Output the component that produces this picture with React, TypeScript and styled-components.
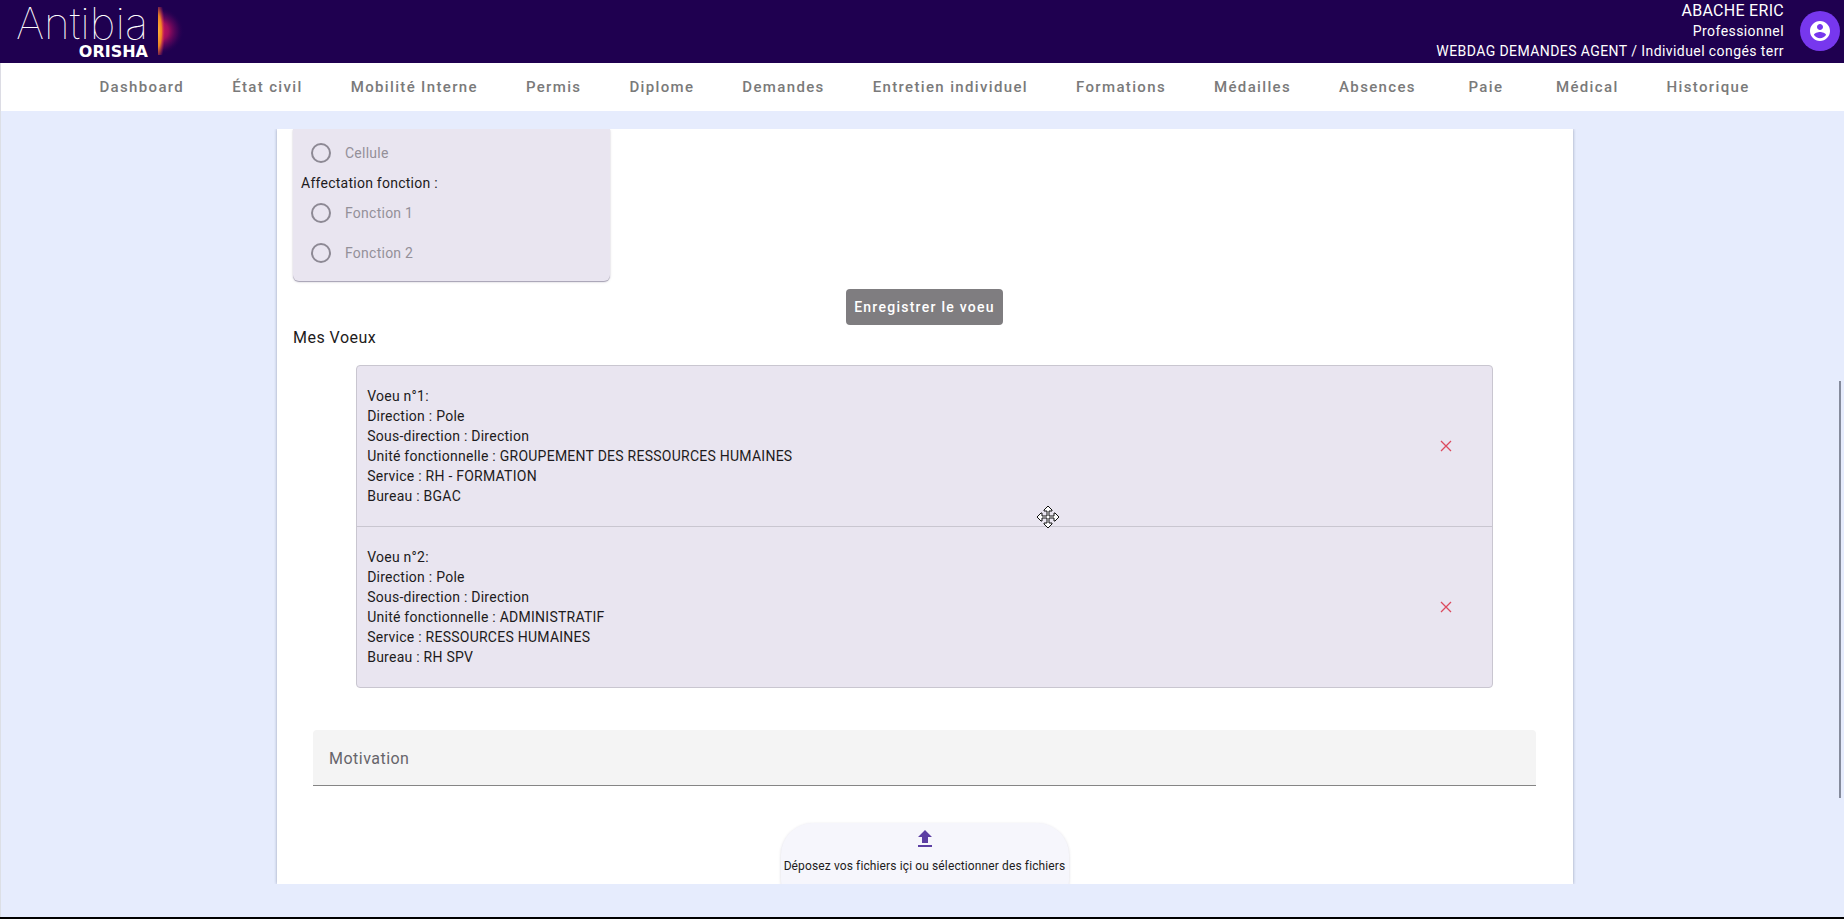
import React from 'react';
import styled, { createGlobalStyle } from 'styled-components';

const GlobalStyle = createGlobalStyle`
  * { box-sizing: border-box; }
  body {
    margin: 0;
    font-family: Roboto, "Liberation Sans", sans-serif;
    font-size: 14px;
    line-height: 20px;
    letter-spacing: 0.018em;
    color: #1d1b20;
    overflow: hidden;
  }
  button, input, textarea { font: inherit; letter-spacing: inherit; }
  p, h2, ul { margin: 0; padding: 0; }
`;

const Page = styled.div`
  display: flex;
  flex-direction: column;
  height: 100vh;
  border-bottom: 2px solid #000;
`;

const Header = styled.header`
  flex: none;
  display: flex;
  justify-content: space-between;
  align-items: center;
  height: 63px;
  padding: 0 4px 1px 0;
  background: #1f0050;
  color: #fff;
`;

const Brand = styled.a`
  display: flex;
  align-items: center;
  gap: 8px;
  color: #fff;
  text-decoration: none;
`;

const BrandWords = styled.span`
  display: flex;
  flex-direction: column;
  align-items: flex-end;
  width: 148px;
`;

const BrandName = styled.span`
  font: 100 44px/42px Inter, sans-serif;
  letter-spacing: normal;
  white-space: nowrap;
`;

const BrandGroup = styled.span`
  font: 700 16px/16px "DejaVu Sans", sans-serif;
  letter-spacing: normal;
`;

const Account = styled.div`
  display: flex;
  align-items: center;
  gap: 16px;
`;

const Identity = styled.div`
  text-align: right;
  letter-spacing: 0.03em;
`;

const IdentityName = styled.p`
  font-size: 16px;
  letter-spacing: 0.018em;
`;

const AvatarButton = styled.button`
  display: grid;
  place-items: center;
  width: 40px;
  height: 40px;
  padding: 0;
  border: 0;
  border-radius: 50%;
  background: #7737ee;
  color: #fff;
`;

const NavBar = styled.nav`
  flex: none;
  display: flex;
  justify-content: center;
  align-items: center;
  gap: 32px;
  height: 48px;
  padding-left: 4px;
  border-left: 1px solid #dcdce4;
  background: #fff;
`;

const NavLink = styled.a`
  min-width: 60px;
  padding: 0 8px;
  font-size: 15px;
  font-weight: 500;
  letter-spacing: 0.09em;
  color: #7a7a7a;
  text-align: center;
  text-decoration: none;
  white-space: nowrap;
`;

const Main = styled.main`
  position: relative;
  flex: 1;
  min-height: 0;
  display: flex;
  padding: 18px 271px 33px 276px;
  border-left: 1px solid #dcdfe6;
  background: #e6ecfd;
`;

const Paper = styled.form`
  flex: 1;
  overflow: hidden;
  padding: 0 17px 0 16px;
  background: #fff;
  box-shadow: 0 0 3px rgba(40, 50, 80, 0.4);
  clip-path: inset(0 -3px);
`;

const ScrollThumb = styled.div`
  position: absolute;
  top: 33.5%;
  right: 3px;
  width: 2px;
  height: 51.7%;
  background: #858b9c;
`;

const ChoiceCard = styled.div`
  width: 317px;
  padding: 4px 8px 8px;
  border-radius: 0 0 6px 6px;
  background: #e9e5f0;
  box-shadow: 0 1px 1px rgba(60, 50, 90, 0.4), 0 1px 3px rgba(60, 50, 90, 0.15);
`;

const RadioRow = styled.label`
  display: flex;
  align-items: center;
  gap: 14px;
  height: 40px;
  padding-left: 10px;
  color: #949099;
`;

const Radio = styled.input`
  appearance: none;
  width: 20px;
  height: 20px;
  margin: 0;
  border: 2px solid #8d8994;
  border-radius: 50%;
`;

const SaveButton = styled.button`
  display: block;
  height: 36px;
  margin: 8px auto 0;
  padding: 0 8px;
  border: 0;
  border-radius: 4px;
  background: #7f7d80;
  color: #fff;
  font-weight: 500;
  letter-spacing: 0.09em;
`;

const SectionTitle = styled.h2`
  font-size: 16px;
  font-weight: 400;
  line-height: 26px;
  letter-spacing: 0.03em;
`;

const WishList = styled.ul`
  width: 90%;
  margin: 14px auto 0;
  border: 1px solid #c9c6d0;
  border-radius: 4px;
  background: #e9e5f0;
  list-style: none;
`;

const Wish = styled.li`
  display: flex;
  justify-content: space-between;
  align-items: center;
  padding: 20px 10px;
  cursor: move;

  & + & { border-top: 1px solid #c9c6d0; }
`;

const RemoveButton = styled.button`
  display: grid;
  place-items: center;
  width: 72px;
  height: 40px;
  padding: 0;
  border: 0;
  background: none;
  color: #dc4a5e;
`;

const MotivationField = styled.input`
  display: block;
  width: calc(100% - 40px);
  height: 56px;
  margin: 42px auto 37px;
  padding: 2px 16px 0;
  border: 0;
  border-bottom: 1px solid #858585;
  border-radius: 4px 4px 0 0;
  background: #f4f4f4;
  font-size: 16px;
  letter-spacing: 0.03em;

  &::placeholder { color: #66646a; opacity: 1; }
`;

const DropZone = styled.button`
  display: flex;
  flex-direction: column;
  align-items: center;
  gap: 5px;
  width: 288px;
  height: 88px;
  margin: 0 auto;
  padding: 4px 0 0;
  border: 0;
  border-radius: 32px;
  background: #f6f6fc;
  box-shadow: 0 1px 3px rgba(60, 50, 90, 0.2);
  color: #1d1b20;
  font-size: 12px;
  letter-spacing: 0.01em;

  svg { color: #5c3fa3; }
`;

const Pointer = styled.svg`
  position: absolute;
  left: 1035px;
  top: 394px;
`;

const navItems = [
  'Dashboard', 'État civil', 'Mobilité Interne', 'Permis', 'Diplome', 'Demandes',
  'Entretien individuel', 'Formations', 'Médailles', 'Absences', 'Paie', 'Médical', 'Historique',
];

const wishes = [
  ['Voeu n°1:', 'Direction : Pole', 'Sous-direction : Direction',
    'Unité fonctionnelle : GROUPEMENT DES RESSOURCES HUMAINES', 'Service : RH - FORMATION', 'Bureau : BGAC'],
  ['Voeu n°2:', 'Direction : Pole', 'Sous-direction : Direction',
    'Unité fonctionnelle : ADMINISTRATIF', 'Service : RESSOURCES HUMAINES', 'Bureau : RH SPV'],
];

function BrandGlow() {
  return (
    <svg width="36" height="52" viewBox="0 0 36 52" aria-hidden="true">
      <defs>
        <radialGradient id="glow" gradientUnits="userSpaceOnUse" cx="0" cy="0" r="1" gradientTransform="translate(2 26) scale(26 24)">
          <stop offset="0" stopColor="#d8175c" />
          <stop offset="0.4" stopColor="#b80f60" stopOpacity="0.85" />
          <stop offset="0.75" stopColor="#6a0660" stopOpacity="0.4" />
          <stop offset="1" stopColor="#1f0050" stopOpacity="0" />
        </radialGradient>
        <radialGradient id="core" gradientUnits="userSpaceOnUse" cx="0" cy="0" r="1" gradientTransform="translate(2 26) scale(7 32)">
          <stop offset="0" stopColor="#ffb43a" />
          <stop offset="0.5" stopColor="#f7901e" stopOpacity="0.9" />
          <stop offset="1" stopColor="#d8175c" stopOpacity="0" />
        </radialGradient>
      </defs>
      <rect x="2" width="34" height="52" fill="url(#glow)" />
      <rect x="2" y="2" width="9" height="48" fill="url(#core)" />
    </svg>
  );
}

function RadioOption({ name, label }: { name: string; label: string }) {
  return (
    <RadioRow>
      <Radio type="radio" name={name} disabled />
      {label}
    </RadioRow>
  );
}

export default function App() {
  return (
    <Page>
      <GlobalStyle />
      <Header>
        <Brand href="#" aria-label="Antibia Orisha">
          <BrandWords>
            <BrandName>Antibia</BrandName>
            <BrandGroup>ORISHA</BrandGroup>
          </BrandWords>
          <BrandGlow />
        </Brand>
        <Account>
          <Identity>
            <IdentityName>ABACHE ERIC</IdentityName>
            <p>Professionnel</p>
            <p>WEBDAG DEMANDES AGENT / Individuel congés terr</p>
          </Identity>
          <AvatarButton type="button" aria-label="Mon compte">
            <svg width="24" height="24" viewBox="0 0 24 24" fill="currentColor">
              <path d="M12 2C6.48 2 2 6.48 2 12s4.48 10 10 10 10-4.48 10-10S17.52 2 12 2zm0 3c1.66 0 3 1.34 3 3s-1.34 3-3 3-3-1.34-3-3 1.34-3 3-3zm0 14.2c-2.5 0-4.71-1.28-6-3.22.03-1.99 4-3.08 6-3.08 1.99 0 5.97 1.09 6 3.08-1.29 1.94-3.5 3.22-6 3.22z" />
            </svg>
          </AvatarButton>
        </Account>
      </Header>
      <NavBar>
        {navItems.map((item) => <NavLink key={item} href="#">{item}</NavLink>)}
      </NavBar>
      <Main>
        <Paper>
          <ChoiceCard>
            <RadioOption name="affectation" label="Cellule" />
            <p>Affectation fonction :</p>
            <RadioOption name="fonction" label="Fonction 1" />
            <RadioOption name="fonction" label="Fonction 2" />
          </ChoiceCard>
          <SaveButton type="button">Enregistrer le voeu</SaveButton>
          <SectionTitle>Mes Voeux</SectionTitle>
          <WishList>
            {wishes.map((lines) => (
              <Wish key={lines[0]}>
                <div>
                  {lines.map((line) => <p key={line}>{line}</p>)}
                </div>
                <RemoveButton type="button" aria-label="Supprimer le voeu">
                  <svg width="12" height="12" viewBox="0 0 12 12" fill="none" stroke="currentColor" strokeWidth="1.3">
                    <path d="M1 1l10 10M11 1L1 11" />
                  </svg>
                </RemoveButton>
              </Wish>
            ))}
          </WishList>
          <MotivationField aria-label="Motivation" placeholder="Motivation" />
          <DropZone type="button">
            <svg width="24" height="24" viewBox="0 0 24 24" fill="currentColor">
              <path d="M5 20h14v-2H5v2zM5 10h4v6h6v-6h4l-7-7-7 7z" />
            </svg>
            Déposez vos fichiers içi ou sélectionner des fichiers
          </DropZone>
        </Paper>
        <ScrollThumb />
        <Pointer width="24" height="24" viewBox="0 0 24 24" fill="#fff" stroke="#111" strokeWidth="1">
          <path d="M12 1l4 4v1h-3v5h5V8h1l4 4-4 4h-1v-3h-5v5h3v1l-4 4-4-4v-1h3v-5H6v3H5l-4-4 4-4h1v3h5V6H8V5z" />
        </Pointer>
      </Main>
    </Page>
  );
}
